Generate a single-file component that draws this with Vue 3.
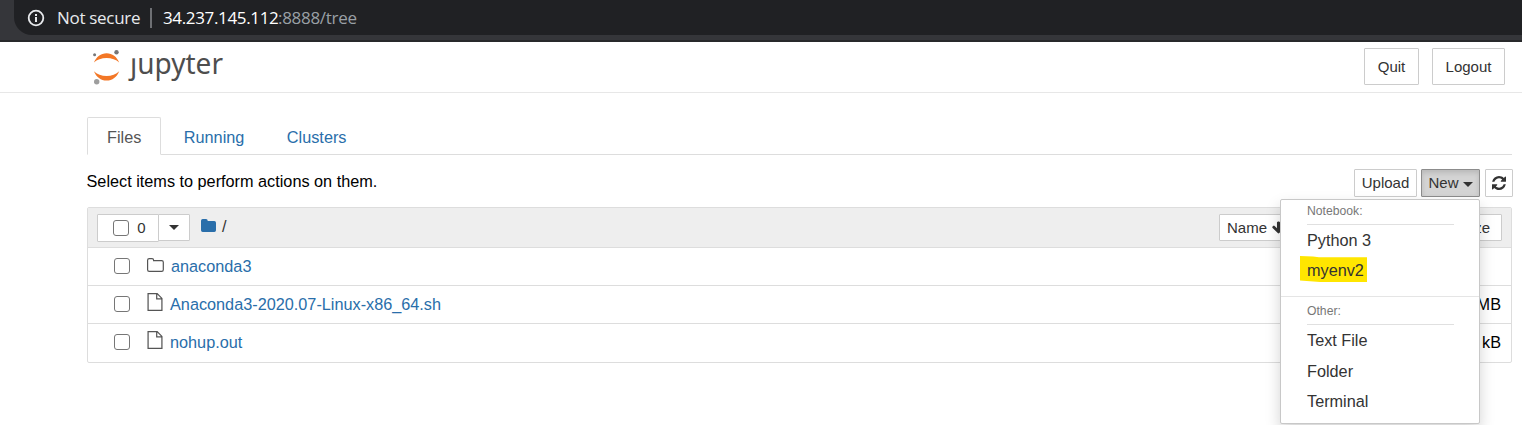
<script setup>
const tabs = ['Files', 'Running', 'Clusters']
const rows = [
  { name: 'anaconda3', kind: 'folder', size: '' },
  { name: 'Anaconda3-2020.07-Linux-x86_64.sh', kind: 'file', size: '551 MB' },
  { name: 'nohup.out', kind: 'file', size: '5.6 kB' },
]
</script>

<template>
  <div class="page">
    <div class="chrome">
      <div class="omnibox">
        <svg class="info" viewBox="0 0 18 18" width="18" height="18">
          <circle cx="9" cy="9" r="7.3" fill="none" stroke="#e8eaed" stroke-width="1.8" />
          <path d="M8 8h2v5H8zM8 5h2v2H8z" fill="#e8eaed" />
        </svg>
        <span class="secure">Not secure</span>
        <span class="bar"></span>
        <span class="host">34.237.145.112</span><span class="path">:8888/tree</span>
      </div>
    </div>

    <header class="header">
      <svg class="logo" viewBox="0 0 134 36" width="134" height="36">
        <g transform="translate(.9 .2)">
          <path d="M2 14.400C4.400 8.600 9 5.100 14.700 5.100S25 8.600 27.300 14.400C24.300 11.200 19.600 9.700 14.700 9.700S5 11.200 2 14.400z" fill="#f37726" />
          <path d="M2 23C4.400 28.800 9 32.300 14.700 32.300S25 28.800 27.300 23C24.300 26.200 19.600 27.700 14.700 27.700S5 26.200 2 23z" fill="#f37726" />
          <circle cx="24.600" cy="4" r="2.200" fill="#767677" />
          <circle cx="2.700" cy="6.500" r="1.500" fill="#767677" />
          <circle cx="4.800" cy="33.600" r="2.700" fill="#9e9e9e" />
        </g>
        <text x="39" y="26" class="wordmark" textLength="93" lengthAdjust="spacingAndGlyphs">jupyter</text>
        <rect x="34" y="1" width="11" height="9.300" fill="#fff" />
      </svg>
      <div class="session">
        <button class="btn large">Quit</button>
        <button class="btn large">Logout</button>
      </div>
    </header>

    <main class="main">
      <nav class="tabs">
        <a v-for="(tab, i) in tabs" :key="tab" class="tab" :class="{ active: i === 0 }">{{ tab }}</a>
      </nav>

      <div class="toolbar">
        <span class="hint">Select items to perform actions on them.</span>
        <div class="actions">
          <button class="btn upload">Upload</button>
          <div class="new-wrap">
            <button class="btn new">New<i class="caret"></i></button>
            <div class="menu">
              <div class="heading">Notebook:</div>
              <a class="item">Python 3</a>
              <a class="item marked">
                <svg class="marker" viewBox="0 0 68 27" width="68" height="27"><path d="M0 0L13 0.500L19 1.300L67 1.300V26L20 26L0 24.600z" fill="#ffe600" /></svg>
                <span>myenv2</span>
              </a>
              <div class="divider"></div>
              <div class="heading">Other:</div>
              <a class="item">Text File</a>
              <a class="item">Folder</a>
              <a class="item">Terminal</a>
            </div>
          </div>
          <button class="btn refresh">
            <svg viewBox="0 0 1536 1536" width="14" height="14"><path fill="#333" d="M1511 928q0 5-1 7-64 268-268 434.500t-478 166.500q-146 0-282.500-55t-243.500-157l-129 129q-19 19-45 19t-45-19-19-45v-448q0-26 19-45t45-19h448q26 0 45 19t19 45-19 45l-137 137q71 66 161 102t187 36q134 0 250-65t186-179q11-17 53-117 8-23 30-23h192q13 0 22.500 9.500t9.500 22.500zm25-800v448q0 26-19 45t-45 19h-448q-26 0-45-19t-19-45 19-45l138-138q-148-137-349-137-134 0-250 65t-186 179q-11 17-53 117-8 23-30 23h-199q-13 0-22.500-9.500t-9.500-22.500v-7q65-268 270-434.500t480-166.500q146 0 284 55.500t245 156.500l130-129q19-19 45-19t45 19 19 45z" /></svg>
          </button>
        </div>
      </div>

      <section class="list">
        <div class="list-head">
          <div class="select">
            <button class="btn count"><span class="check"></span>0</button>
            <button class="btn drop"><i class="caret"></i></button>
          </div>
          <svg class="home" viewBox="0 0 15 13" width="15" height="13"><path fill="#296eaa" d="M0 1.700Q0 0 1.700 0H5Q6.700 0 6.700 1.700V2H13.300Q15 2 15 3.700V11.300Q15 13 13.300 13H1.700Q0 13 0 11.300z" /></svg>
          <span class="slash">/</span>
          <div class="sorts">
            <button class="btn sort">Name<svg viewBox="80 90 1632 1560" width="13" height="13"><path fill="#333" d="M1675 832q0 51-37 90l-651 652q-39 37-91 37-53 0-90-37l-651-652q-38-36-38-90 0-53 38-91l74-75q39-37 91-37 53 0 90 37l294 294v-704q0-52 38-90t90-38h128q52 0 90 38t38 90v704l294-294q37-37 90-37 52 0 91 37l75 75q37 39 37 91z" /></svg></button>
            <button class="btn sort size-sort">File size</button>
          </div>
        </div>
        <div v-for="row in rows" :key="row.name" class="row">
          <span class="check"></span>
          <svg v-if="row.kind === 'folder'" class="icon folder" viewBox="0 0 17 14" width="17" height="14"><path d="M.6 2.200Q.6.600 2.200.600H5Q6.600.600 6.600 2.200V2.700H14.700Q16.300 2.700 16.300 4.300V11.800Q16.300 13.400 14.700 13.400H2.200Q.6 13.400.6 11.800z" fill="none" stroke="#555" stroke-width="1.200" /></svg>
          <svg v-else class="icon file" viewBox="0 0 16 19" width="16" height="18"><path d="M.7.700H10.300L15.300 5.700V18.300H.7zM9.800.700V6.200H15.300" fill="none" stroke="#555" stroke-width="1.300" /></svg>
          <a class="name">{{ row.name }}</a>
          <span class="size">{{ row.size }}</span>
        </div>
      </section>
    </main>
  </div>
</template>

<style>
html, body { margin: 0; background: #fff; overflow: hidden; }
</style>

<style scoped>
* { box-sizing: border-box; }
.page {
  width: 1522px; height: 425px; overflow: hidden; background: #fff; color: #000;
  font-family: "Liberation Sans", Arial, sans-serif; font-size: 16.25px; line-height: 20px;
}
.chrome { height: 42px; background: #35363a; border-bottom: 2px solid #28292b; padding-left: 14px; }
.omnibox {
  height: 35px; background: #202124; border-radius: 0 0 0 18px;
  display: flex; align-items: center; padding-left: 13px;
  font-family: "Open Sans", "Noto Sans", sans-serif; font-size: 17px; white-space: nowrap;
}
.info { margin-right: 12px; }
.secure { color: #e8eaed; width: 93px; letter-spacing: -0.3px; }
.bar { width: 2px; height: 20px; background: #6e7074; margin-right: 11px; }
.host { color: #fff; width: 115px; letter-spacing: -0.35px; }
.path { color: #9aa0a6; letter-spacing: -0.3px; }

.header {
  height: 51px; border-bottom: 1px solid #e7e7e7; padding: 6px 17px 0 91px;
  display: flex; justify-content: space-between; align-items: flex-start;
}
.logo { overflow: visible; }
.wordmark { font-family: "Noto Sans", "Open Sans", sans-serif; font-size: 29px; fill: #4e4e4e; }
.session { display: flex; gap: 13px; }
.btn {
  margin: 0; padding: 0; border: 1px solid #ccc; border-radius: 1px; background: #fff; color: #333;
  font-family: inherit; font-size: 15px; line-height: 20px; height: 28px;
  display: flex; align-items: center; justify-content: center; white-space: nowrap;
}
.large { height: 37px; width: 55px; }
.large + .large { width: 73px; }

.main { padding: 24px 10px 0 87px; }
.tabs { display: flex; height: 38px; border-bottom: 1px solid #ddd; }
.tab { height: 38px; padding: 9px 19px 0; border: 1px solid transparent; color: #296eaa; margin-right: 2.500px; }
.tab.active { color: #555; border-color: #ddd #ddd #fff; border-radius: 2px 2px 0 0; background: #fff; }
.toolbar { height: 52px; padding-top: 14px; display: flex; justify-content: space-between; align-items: flex-start; }
.hint { margin: 2px 0 0 -0.500px; }
.actions { display: flex; margin-right: -1px; }
.upload { width: 63px; margin-right: 4px; }
.new-wrap { position: relative; margin-right: 5px; }
.new { width: 59px; background: #d4d4d4; border-color: #8c8c8c; box-shadow: inset 0 3px 5px rgba(0, 0, 0, .125); }
.refresh { width: 28px; }
.caret { border: 5px solid transparent; border-top-color: #333; border-bottom: 0; }
.new .caret { margin-left: 4px; margin-top: 2px; }

.menu {
  position: absolute; z-index: 2; top: 30px; right: 0; width: 200px; height: 225px; background: #fff;
  border: 1px solid #c8c8c8; border-radius: 2px; box-shadow: 0 7px 15px rgba(0, 0, 0, .175);
}
.heading { margin: 0 25px 0 26px; height: 25px; padding-top: 1px; border-bottom: 1px solid #e0e0e0; font-size: 12.2px; color: #777; }
.item { display: flex; align-items: center; height: 30.400px; padding-left: 26px; color: #333; }
.marked { position: relative; }
.marker { position: absolute; left: 19px; top: 1px; }
.marked span { position: relative; top: -1px; }
.divider { height: 1px; background: #e5e5e5; margin: 10px 0 3px; }
.divider ~ .item { height: 30.600px; }

.list { border: 1px solid #ddd; border-radius: 2px; height: 156px; }
.list-head { height: 40px; background: #eee; border-bottom: 1px solid #ddd; display: flex; align-items: flex-start; padding: 6px 9px 0; }
.select { display: flex; align-items: flex-start; }
.check { width: 16px; height: 16px; border: 1.500px solid #767676; border-radius: 3px; background: #fff; flex: none; }
.count { width: 62px; gap: 8px; padding-left: 3px; }
.drop { width: 32px; height: 27px; margin-left: -1px; }
.home { margin: 5px 0 0 11px; }
.slash { margin: 2px 0 0 6px; color: #333; }
.sorts { margin-left: auto; display: flex; justify-content: space-between; width: 283px; }
.sort { height: 27px; padding: 0 7px; }
.sort svg { margin-left: 4.500px; }
.size-sort { padding: 0 11px; }
.row { height: 38px; border-bottom: 1px solid #ddd; display: flex; align-items: center; padding: 0 10px 2px 26px; }
.row:last-child { border-bottom: 0; }
.icon { margin-left: 17px; flex: none; }
.folder { margin-top: -2px; }
.file { margin-top: -4px; }
.name { color: #296eaa; margin-left: 7px; }
.size { margin-left: auto; }
</style>
